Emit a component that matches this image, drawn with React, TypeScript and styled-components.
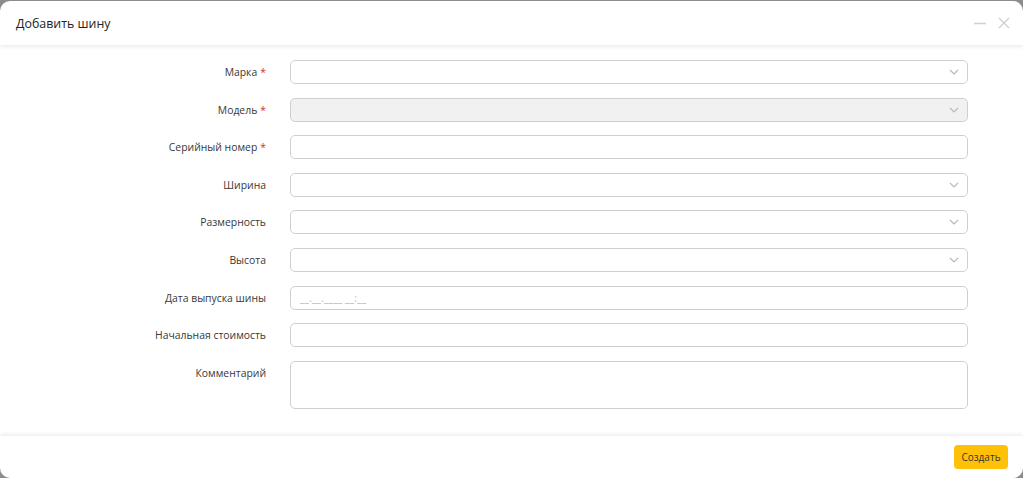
import { FC, Fragment } from 'react'
import styled, { createGlobalStyle } from 'styled-components'

const Global = createGlobalStyle`
  html, body { margin: 0; padding: 0; background: #8c8c8c; }
  body { font-family: 'Open Sans', 'Noto Sans', sans-serif; }
  * { box-sizing: border-box; }
`

const Modal = styled.div`
  margin-top: 1px;
  width: 1023px;
  height: 477px;
  background: #fff;
  border-radius: 10px;
  display: flex;
  flex-direction: column;
  overflow: hidden;
`

const Header = styled.div`
  height: 44px;
  flex: none;
  display: flex;
  align-items: center;
  justify-content: space-between;
  padding: 0 13px 0 16px;
  box-shadow: 0 2px 4px rgba(0, 0, 0, 0.08);
  position: relative;
  z-index: 1;
  .title {
    font-size: 12.4px;
    color: #222;
  }
  .tools {
    display: flex;
    gap: 12px;
    align-items: center;
  }
`

const Body = styled.div`
  flex: 1;
  padding-top: 15px;
  display: grid;
  grid-template-columns: 266px 678px;
  column-gap: 24px;
  row-gap: 13.6px;
  align-content: start;
`

const Label = styled.div`
  font-size: 10.4px;
  color: #383838;
  text-align: right;
  height: 24px;
  line-height: 24px;
  span { color: #d32f2f; margin-left: 3px; }
`

const Field = styled.div<{ $disabled?: boolean; $tall?: boolean }>`
  height: ${p => (p.$tall ? '48px' : '24px')};
  border: 1px solid #cfcfcf;
  border-radius: 5px;
  background: ${p => (p.$disabled ? '#f1f1f1' : '#fff')};
  display: flex;
  align-items: center;
  justify-content: space-between;
  padding: 0 8px 0 9px;
  .ph {
    font-size: 10px;
    color: #b5b5b5;
    letter-spacing: 0.2px;
  }
`

const Footer = styled.div`
  height: 42px;
  flex: none;
  display: flex;
  align-items: center;
  justify-content: flex-end;
  padding: 0 15px 0 0;
  box-shadow: 0 -2px 4px rgba(0, 0, 0, 0.07);
`

const Button = styled.button`
  height: 24px;
  width: 54px;
  border: none;
  border-radius: 4px;
  background: #ffc107;
  color: #333;
  font-family: 'Open Sans', sans-serif;
  font-size: 10px;
  padding: 0;
`

const Chevron: FC = () => (
  <svg width="10" height="6" viewBox="0 0 10 6">
    <path d="M1 1l4 4 4-4" fill="none" stroke="#b8b8b8" strokeWidth="1.2" />
  </svg>
)

type Row = { label: string; req?: boolean; kind: 'select' | 'input' | 'date' | 'area'; disabled?: boolean }

const rows: Row[] = [
  { label: 'Марка', req: true, kind: 'select' },
  { label: 'Модель', req: true, kind: 'select', disabled: true },
  { label: 'Серийный номер', req: true, kind: 'input' },
  { label: 'Ширина', kind: 'select' },
  { label: 'Размерность', kind: 'select' },
  { label: 'Высота', kind: 'select' },
  { label: 'Дата выпуска шины', kind: 'date' },
  { label: 'Начальная стоимость', kind: 'input' },
  { label: 'Комментарий', kind: 'area' },
]

export default function App() {
  return (
    <>
      <Global />
      <Modal>
        <Header>
          <div className="title">Добавить шину</div>
          <div className="tools">
            <svg width="12" height="12" viewBox="0 0 12 12">
              <path d="M0 6.5h12" stroke="#d0d0d0" strokeWidth="1.3" />
            </svg>
            <svg width="12" height="12" viewBox="0 0 12 12">
              <path d="M1 1l10 10M11 1L1 11" stroke="#d0d0d0" strokeWidth="1.4" />
            </svg>
          </div>
        </Header>
        <Body>
          {rows.map(r => (
            <Fragment key={r.label}>
              <Label>
                {r.label}
                {r.req && <span>*</span>}
              </Label>
              <Field $disabled={r.disabled} $tall={r.kind === 'area'}>
                {r.kind === 'date' ? <span className="ph">__.__.____ __:__</span> : <span />}
                {r.kind === 'select' && <Chevron />}
              </Field>
            </Fragment>
          ))}
        </Body>
        <Footer>
          <Button>Создать</Button>
        </Footer>
      </Modal>
    </>
  )
}
